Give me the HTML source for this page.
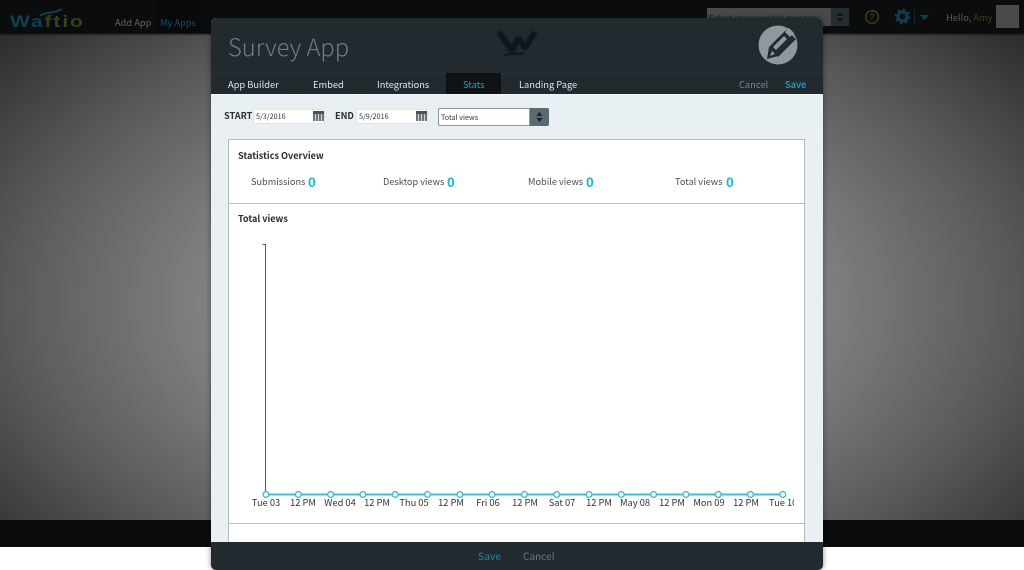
<!DOCTYPE html>
<html><head><meta charset="utf-8"><style>
*{box-sizing:border-box}
html,body{margin:0;padding:0}
body{width:1024px;height:570px;overflow:hidden;background:#fff;position:relative;font-family:"Noto Sans CJK JP","Liberation Sans",sans-serif}
.a{position:absolute;white-space:nowrap}
.nav{font-size:9.300px;color:#e3e6e7;top:77px;line-height:14px}
.lb{font-size:9.200px;color:#4a4f52;line-height:14px;top:174px}
.n{font-size:14px;font-weight:bold;color:#22b5dc;top:173px;line-height:18px;font-family:"Liberation Sans",sans-serif}
.d{height:15px;width:72px;background:#fff;border:1px solid #dfe6e8;font-size:7.200px;color:#333;line-height:14px;padding-left:2px;top:109px}
.x{font-size:9.300px;color:#333;top:495px;line-height:14px;transform:translateX(-50%)}
.s{font-size:9.100px;font-weight:bold;line-height:14px;color:#2a2f32}
</style></head><body>
<div class="a" style="left:0;top:33px;width:1024px;height:487px;background:radial-gradient(ellipse 690px 410px at 512px 270px,#8c8c8c 0%,#808080 45%,#5a5a5a 72%,#2a2a2a 100%)"></div>
<div class="a" style="left:0;top:0;width:1024px;height:33px;background:#0b0c0e;box-shadow:0 1px 2px #000"></div>
<div class="a" style="left:0;top:520px;width:1024px;height:27px;background:#0a0b0c"></div>

<div class="a" style="left:10px;top:10px;font-size:21px;font-weight:bold;line-height:20px;letter-spacing:1.900px;color:#10404e;font-family:'Liberation Sans',sans-serif;transform:scaleY(.78);transform-origin:0 100%">Wa<span style="color:#34441a">ftio</span></div>
<svg class="a" style="left:38px;top:7px" width="26" height="10"><path d="M2 9C8 4 13 8 24 2" stroke="#10404e" stroke-width="2" fill="none"/></svg>
<div class="a" style="left:157px;top:0;width:43px;height:33px;background:#08090a"></div>
<div class="a" style="left:115px;top:15px;font-size:9.300px;line-height:14px;color:#5f6162">Add App</div>
<div class="a" style="left:160px;top:15px;font-size:9.300px;line-height:14px;color:#0f5068">My Apps</div>

<div class="a" style="left:707px;top:8px;width:124px;height:18px;background:#4a4a4a;overflow:hidden;font-size:8px;color:#1a1a1a;line-height:14px;padding-left:2px;padding-top:4px">Select an account to manage</div>
<div class="a" style="left:831px;top:8px;width:18px;height:18px;background:#242d31"></div>
<svg class="a" style="left:835px;top:11px" width="10" height="12"><path d="M5 1l3 4H2zM5 11l3-4H2z" fill="#0f1214"/></svg>
<svg class="a" style="left:864px;top:9px" width="16" height="16"><circle cx="8" cy="8" r="6.300" stroke="#33400f" stroke-width="1.600" fill="none"/><text x="8" y="11" font-size="9" font-weight="bold" text-anchor="middle" fill="#33400f" font-family="Liberation Sans">?</text></svg>
<svg class="a" style="left:894px;top:8px" width="17" height="17"><circle cx="8.500" cy="8.500" r="4.500" stroke="#0b4055" stroke-width="3" fill="none"/><circle cx="8.500" cy="8.500" r="6.500" stroke="#0b4055" stroke-width="2.500" stroke-dasharray="2.500 2.600" fill="none"/></svg>
<div class="a" style="left:914px;top:10px;width:1px;height:14px;background:#16262c"></div>
<svg class="a" style="left:920px;top:15px" width="9" height="5"><path d="M0 0h9L4.500 5z" fill="#0b4055"/></svg>
<div class="a" style="left:946px;top:10px;font-size:9.300px;line-height:14px;color:#55585a">Hello, <span style="color:#3a4418">Amy</span></div>
<div class="a" style="left:996px;top:5px;width:23px;height:23px;background:#4a4a4a"></div>

<!-- modal -->
<div class="a" style="left:211px;top:18px;width:612px;height:552px;border-radius:5px;background:#e8f0f3;overflow:hidden;box-shadow:0 0 6px rgba(0,0,0,.45)">
  <div class="a" style="left:0;top:0;width:612px;height:76px;background:#212a2f"></div>
  <div class="a" style="left:0;top:55px;width:612px;height:1px;background:#2b3439"></div>
  <div class="a" style="left:0;top:76px;width:612px;height:1px;background:#f4f8f9"></div>
</div>
<div class="a" style="left:228px;top:27px;font-size:23.700px;font-weight:300;line-height:38px;color:#727b7f">Survey App</div>
<svg class="a" style="left:495px;top:28px" width="44" height="32"><path d="M4 4l13 19 6-13 7 10 10-16" stroke="#11161a" stroke-width="6" stroke-linejoin="bevel" fill="none"/><path d="M9 28c6-4 12-1 20-3" stroke="#11161a" stroke-width="2" fill="none"/></svg>
<svg class="a" style="left:757px;top:25px" width="42" height="42"><circle cx="21" cy="20" r="19.500" fill="#8f989b"/><path d="M12 22L29 5l10 9-18 18z" fill="#212a2f"/><path d="M16 22L27 11l3 3-11 11z" fill="#8f989b"/><path d="M28 7l4-4 5 5-4 4z" fill="#8f989b"/><path d="M12 22l9 9-11 3z" fill="#212a2f"/><path d="M15 26l3 3-5 2z" fill="#8f989b"/></svg>

<div class="a" style="left:446px;top:73px;width:55px;height:21px;background:#0e1215"></div>
<div class="a nav" style="left:228px">App Builder</div>
<div class="a nav" style="left:313px">Embed</div>
<div class="a nav" style="left:377px">Integrations</div>
<div class="a nav" style="left:463px;color:#22a3cf">Stats</div>
<div class="a nav" style="left:519px">Landing Page</div>
<div class="a nav" style="left:739px;color:#7d8487">Cancel</div>
<div class="a nav" style="left:785px;color:#1fa5d6;font-weight:500">Save</div>

<!-- filter row -->
<div class="a s" style="left:224px;top:108px">START</div>
<div class="a d" style="left:253px">5/3/2016</div>
<div class="a" style="left:313px;top:111px;width:11px;height:10px;background:repeating-linear-gradient(90deg,#6d7478 0 2px,#cfd6d8 2px 3px);border-top:3px solid #4c5356"></div>
<div class="a s" style="left:335px;top:108px">END</div>
<div class="a d" style="left:356px">5/9/2016</div>
<div class="a" style="left:416px;top:111px;width:11px;height:10px;background:repeating-linear-gradient(90deg,#6d7478 0 2px,#cfd6d8 2px 3px);border-top:3px solid #4c5356"></div>
<div class="a" style="left:438px;top:108px;width:92px;height:18px;background:#fff;border:1px solid #8d979c;border-radius:2px 0 0 2px;font-size:7.200px;color:#333;line-height:19px;padding-left:2px">Total views</div>
<div class="a" style="left:530px;top:108px;width:19px;height:18px;background:#5a6a72;border-radius:0 2px 2px 0"></div>
<svg class="a" style="left:535px;top:111px" width="9" height="12"><path d="M4.500 1l3 4h-6zM4.500 11l3-4h-6z" fill="#1c2226"/></svg>

<!-- panel -->
<div class="a" style="left:228px;top:139px;width:577px;height:404px;background:#fff;border:1px solid #b4bcc0;border-bottom:0"></div>
<div class="a" style="left:229px;top:203px;width:575px;height:1px;background:#b9bfc2"></div>
<div class="a" style="left:229px;top:523px;width:575px;height:1px;background:#b9bfc2"></div>
<div class="a s" style="left:238px;top:148px">Statistics Overview</div>
<div class="a lb" style="left:251px">Submissions</div><div class="a n" style="left:308px">0</div>
<div class="a lb" style="left:383px">Desktop views</div><div class="a n" style="left:447px">0</div>
<div class="a lb" style="left:528px">Mobile views</div><div class="a n" style="left:586px">0</div>
<div class="a lb" style="left:675px">Total views</div><div class="a n" style="left:726px">0</div>
<div class="a s" style="left:238px;top:211px">Total views</div>

<!-- chart -->
<svg class="a" style="left:229px;top:240px" width="566" height="262">
  <path d="M33.500 4.500h3M36.500 4V254" stroke="#555" stroke-width="1" fill="none"/>
  <path d="M37 254.500H554" stroke="#3fbcd8" stroke-width="2" fill="none"/>
  <g fill="#fff" stroke="#3fbcd8" stroke-width="1.400">
    <circle cx="37" cy="254.500" r="2.900"/><circle cx="69.300" cy="254.500" r="2.900"/><circle cx="101.600" cy="254.500" r="2.900"/><circle cx="133.900" cy="254.500" r="2.900"/><circle cx="166.200" cy="254.500" r="2.900"/><circle cx="198.500" cy="254.500" r="2.900"/><circle cx="230.800" cy="254.500" r="2.900"/><circle cx="263.100" cy="254.500" r="2.900"/><circle cx="295.400" cy="254.500" r="2.900"/><circle cx="327.700" cy="254.500" r="2.900"/><circle cx="360" cy="254.500" r="2.900"/><circle cx="392.300" cy="254.500" r="2.900"/><circle cx="424.600" cy="254.500" r="2.900"/><circle cx="456.900" cy="254.500" r="2.900"/><circle cx="489.200" cy="254.500" r="2.900"/><circle cx="521.500" cy="254.500" r="2.900"/><circle cx="553.800" cy="254.500" r="2.900"/>
  </g>
</svg>
<div class="a x" style="left:266px">Tue 03</div>
<div class="a x" style="left:303px">12 PM</div>
<div class="a x" style="left:340px">Wed 04</div>
<div class="a x" style="left:377px">12 PM</div>
<div class="a x" style="left:414px">Thu 05</div>
<div class="a x" style="left:451px">12 PM</div>
<div class="a x" style="left:488px">Fri 06</div>
<div class="a x" style="left:525px">12 PM</div>
<div class="a x" style="left:562px">Sat 07</div>
<div class="a x" style="left:599px">12 PM</div>
<div class="a x" style="left:635px">May 08</div>
<div class="a x" style="left:672px">12 PM</div>
<div class="a x" style="left:709px">Mon 09</div>
<div class="a x" style="left:746px">12 PM</div>
<div class="a" style="left:769px;top:495px;width:25px;overflow:hidden;font-size:9.300px;line-height:14px;color:#333">Tue 10</div>

<!-- footer -->
<div class="a" style="left:211px;top:542px;width:612px;height:28px;background:#212a2f;border-radius:0 0 5px 5px"></div>
<div class="a" style="left:478px;top:548px;font-size:10.300px;line-height:16px;color:#1b87ad">Save</div>
<div class="a" style="left:523px;top:548px;font-size:10.100px;line-height:16px;color:#6c7478">Cancel</div>
</body></html>
